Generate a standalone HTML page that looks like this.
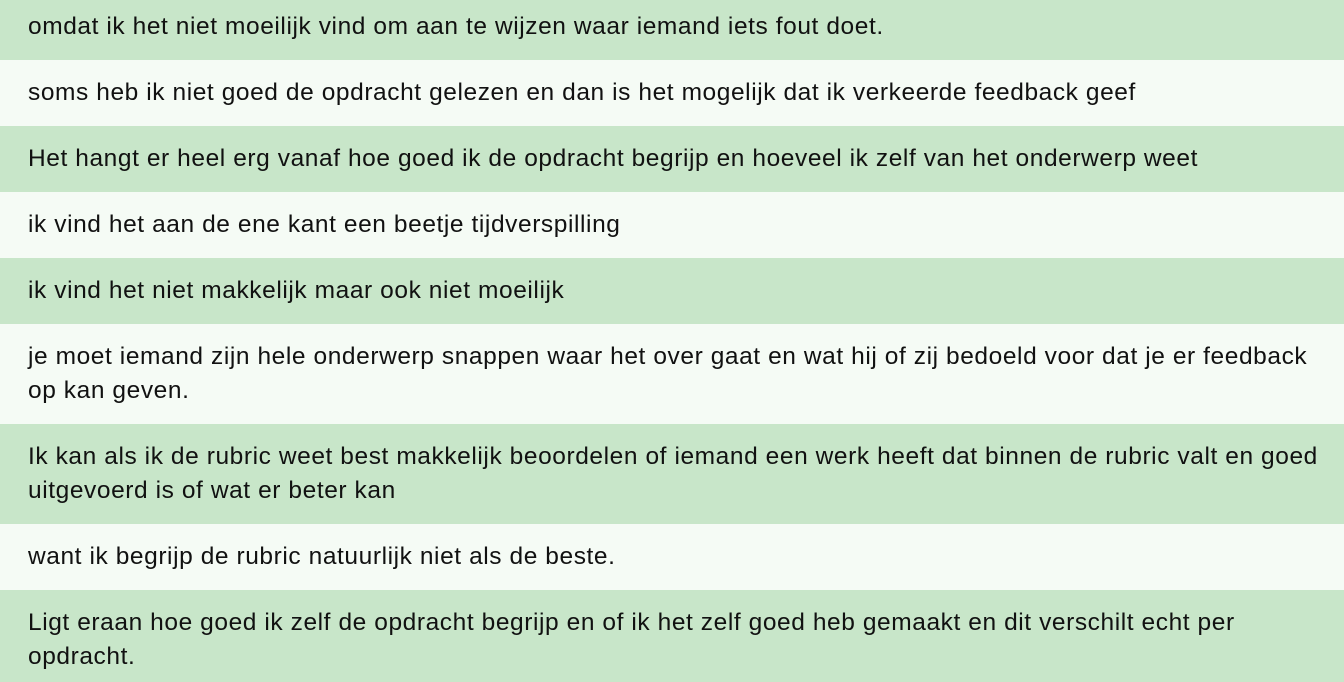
<!DOCTYPE html>
<html><head><meta charset="utf-8"><style>
html,body{margin:0;padding:0;width:1344px;height:682px;overflow:hidden;background:#f5fbf5}
.w{margin-top:-6px}
.r{padding:16px 28px;line-height:34px;font-family:"Liberation Sans",Arial,sans-serif;font-size:24.5px;letter-spacing:0.58px;color:#111;white-space:nowrap}
.g{background:#c8e6c9}.l{background:#f5fbf5}
</style></head><body><div class="w">
<div class="r g">omdat ik het niet moeilijk vind om aan te wijzen waar iemand iets fout doet.</div>
<div class="r l">soms heb ik niet goed de opdracht gelezen en dan is het mogelijk dat ik verkeerde feedback geef</div>
<div class="r g">Het hangt er heel erg vanaf hoe goed ik de opdracht begrijp en hoeveel ik zelf van het onderwerp weet</div>
<div class="r l">ik vind het aan de ene kant een beetje tijdverspilling</div>
<div class="r g">ik vind het niet makkelijk maar ook niet moeilijk</div>
<div class="r l">je moet iemand zijn hele onderwerp snappen waar het over gaat en wat hij of zij bedoeld voor dat je er feedback<br>op kan geven.</div>
<div class="r g">Ik kan als ik de rubric weet best makkelijk beoordelen of iemand een werk heeft dat binnen de rubric valt en goed<br>uitgevoerd is of wat er beter kan</div>
<div class="r l">want ik begrijp de rubric natuurlijk niet als de beste.</div>
<div class="r g">Ligt eraan hoe goed ik zelf de opdracht begrijp en of ik het zelf goed heb gemaakt en dit verschilt echt per<br>opdracht.</div>
</div></body></html>
